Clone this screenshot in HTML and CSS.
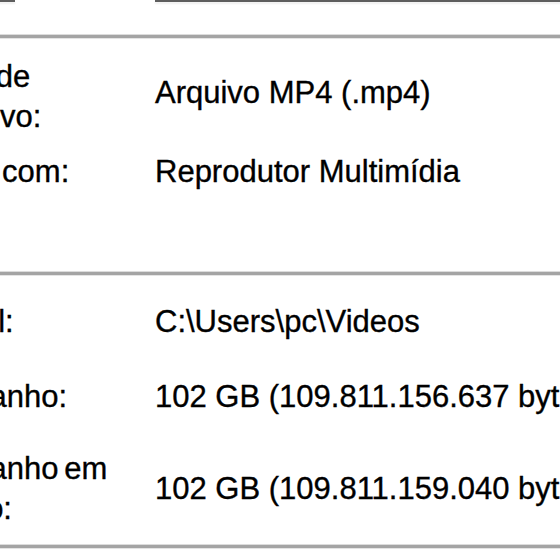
FILE: index.html
```html
<!DOCTYPE html>
<html lang="pt-BR">
<head>
    <meta charset="UTF-8">
    <title>Propriedades de Vídeos</title>
    <link rel="stylesheet" href="styles.css">
</head>
<body>
    <div class="sheet">
        <div class="top">
            <div class="icon-box"></div>
            <div class="name-box"></div>
        </div>

        <div class="sep sep-first"></div>

        <div class="group group-type">
            <div class="row">
                <div class="label">Tipo de<br>arquivo:</div>
                <div class="value value-two">Arquivo MP4 (.mp4)</div>
            </div>
            <div class="row row-opens">
                <div class="label">Abre com:</div>
                <div class="value">Reprodutor Multimídia</div>
            </div>
        </div>

        <div class="sep sep-second"></div>

        <div class="group group-size">
            <div class="row">
                <div class="label">Local:</div>
                <div class="value">C:\Users\pc\Videos</div>
            </div>
            <div class="row row-size">
                <div class="label">Tamanho:</div>
                <div class="value">102 GB (109.811.156.637 bytes)</div>
            </div>
            <div class="row row-disk">
                <div class="label">Tamanho em<br>disco:</div>
                <div class="value value-disk">102 GB (109.811.159.040 bytes)</div>
            </div>
        </div>

        <div class="sep sep-last"></div>
    </div>
</body>
</html>
```

FILE: styles.css
```css
* {
    margin: 0;
    padding: 0;
    box-sizing: border-box;
}

html, body {
    width: 560px;
    height: 560px;
    overflow: hidden;
    background: #ffffff;
}

body {
    font-family: "Liberation Sans", Arial, sans-serif;
    font-size: 31px;
    line-height: 40px;
    color: #000000;
    -webkit-text-stroke: 0.35px #000000;
}

.sheet {
    width: 900px;
    margin-left: -65px;
}

/* top strip: bottom edges of the icon and the name box */
.top {
    display: flex;
    gap: 140px;
    height: 2px;
}

.icon-box,
.name-box {
    height: 2px;
    background: #5e5e5e;
    box-shadow: 0 2px 2px rgba(0, 0, 0, 0.07);
}

.icon-box {
    width: 80px;
}

.name-box {
    flex: 1;
}

/* etched separator */
.sep {
    height: 3px;
    background: #a4a4a4;
    box-shadow: 0 -1px 0 #dcdcdc, 0 1px 0 #e4e4e4;
}

.sep-first {
    margin-top: 33px;
}

.sep-second {
    margin-top: 80px;
}

.sep-last {
    margin-top: 16px;
}

.group-type {
    padding-top: 19px;
}

.group-size {
    padding-top: 27px;
}

.row {
    display: grid;
    grid-template-columns: 220px auto;
    white-space: nowrap;
}

.label {
    margin-left: -4px;
    word-spacing: -3px;
}

.row-opens {
    margin-top: 15px;
}

.row-size {
    margin-top: 35px;
}

.row-disk {
    margin-top: 32px;
}

.value-two {
    padding-top: 16px;
}

.value-disk {
    padding-top: 20px;
}
```
